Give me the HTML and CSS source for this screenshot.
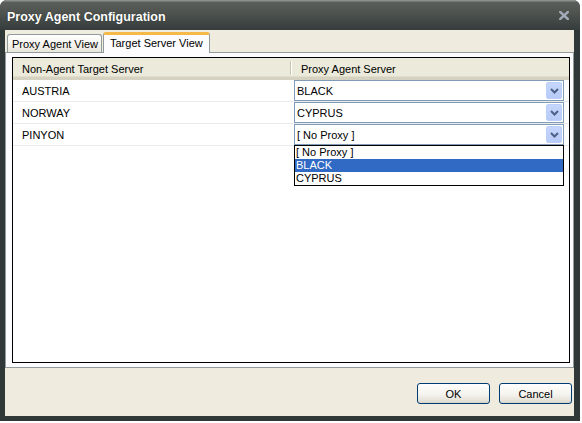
FILE: index.html
```html
<!DOCTYPE html>
<html>
<head>
<meta charset="utf-8">
<link rel="stylesheet" href="styles.css">
</head>
<body>
<div class="window">
  <div class="titlebar">
    <span class="title">Proxy Agent Configuration</span>
    <svg class="close" width="10" height="9" viewBox="0 0 10 9"><path d="M1.2 1 L8.8 8 M8.8 1 L1.2 8" stroke="#a2aab7" stroke-width="2.4" stroke-linecap="square"/></svg>
  </div>
  <div class="client">
    <div class="tabs">
      <div class="tab">Proxy Agent View</div>
      <div class="tab active">Target Server View</div>
    </div>
    <div class="panel">
      <div class="list">
        <div class="header">
          <div class="hcell first">Non-Agent Target Server</div>
          <div class="hdiv"></div>
          <div class="hcell">Proxy Agent Server</div>
        </div>
        <div class="row">
          <div class="name">AUSTRIA</div>
          <div class="combo"><span class="val">BLACK</span><span class="btn"><svg width="9" height="6" viewBox="0 0 9 6"><path d="M1 1 L4.5 4.5 L8 1" fill="none" stroke="#4d6185" stroke-width="2"/></svg></span></div>
        </div>
        <div class="row">
          <div class="name">NORWAY</div>
          <div class="combo"><span class="val">CYPRUS</span><span class="btn"><svg width="9" height="6" viewBox="0 0 9 6"><path d="M1 1 L4.5 4.5 L8 1" fill="none" stroke="#4d6185" stroke-width="2"/></svg></span></div>
        </div>
        <div class="row open">
          <div class="name">PINYON</div>
          <div class="combo"><span class="val">[ No Proxy ]</span><span class="btn"><svg width="9" height="6" viewBox="0 0 9 6"><path d="M1 1 L4.5 4.5 L8 1" fill="none" stroke="#4d6185" stroke-width="2"/></svg></span></div>
          <div class="dropdown">
            <div class="opt">[ No Proxy ]</div>
            <div class="opt sel">BLACK</div>
            <div class="opt">CYPRUS</div>
          </div>
        </div>
      </div>
    </div>
    <div class="actions">
      <button class="button">OK</button>
      <button class="button">Cancel</button>
    </div>
  </div>
</div>
</body>
</html>
```
FILE: styles.css
```css
* { box-sizing: border-box; }
body {
  margin: 0;
  background: #ffffff;
  font-family: "Liberation Sans", Arial, sans-serif;
  font-size: 11px;
  color: #000;
}
.window {
  width: 580px;
  height: 421px;
  background: #2f3737;
  border-radius: 7px 7px 0 0;
  display: flex;
  flex-direction: column;
}
.titlebar {
  flex: none;
  height: 30px;
  border-radius: 7px 7px 0 0;
  background: linear-gradient(#8d918d 0, #8d918d 1px, #5a5f5b 2px, #4d524e 45%, #353c3c 100%);
  display: flex;
  align-items: center;
  justify-content: space-between;
  padding: 3px 11px 0 7px;
}
.title {
  color: #ffffff;
  font-weight: bold;
  font-size: 12.5px;
  text-shadow: 0 0 1px rgba(0,0,0,0.5);
}
.close { display: block; margin-top: -2px; }
.client {
  flex: 1;
  margin: 0 6px 5px 5px;
  background: #efebdf;
  display: flex;
  flex-direction: column;
}
.tabs {
  flex: none;
  height: 22px;
  display: flex;
  align-items: flex-end;
  gap: 1px;
  padding-left: 2px;
}
.tab {
  width: 95px;
  height: 18px;
  padding: 1px 0 0 4px;
  border: 1px solid #919b9c;
  border-bottom: none;
  border-radius: 3px 3px 0 0;
  background: linear-gradient(#ffffff, #f3f2ec 60%, #e8e6dc);
  display: flex;
  align-items: center;
  white-space: nowrap;
}
.tab.active {
  width: 107px;
  height: 21px;
  padding: 0 0 2px 6px;
  border-top: 3px solid #f5b94a;
  background: #fcfcfe;
  margin-bottom: -1px;
  position: relative;
  z-index: 1;
}
.panel {
  flex: none;
  height: 316px;
  border: 1px solid #919b9c;
  background: #fcfcfe;
  padding: 4px 3px 4px 6px;
  display: flex;
}
.list {
  flex: 1;
  border: 1px solid #000;
  background: #ffffff;
}
.header {
  height: 22px;
  display: flex;
  align-items: center;
  background: #ebeadb;
  border-bottom: 3px solid #d6d2c2;
  box-shadow: inset 0 -1px 0 #e2decd;
}
.hcell { padding-left: 9px; padding-top: 2px; }
.hcell.first { width: 277px; }
.hdiv {
  width: 2px;
  height: 14px;
  border-left: 1px solid #c7c5b2;
  border-right: 1px solid #ffffff;
}
.row {
  height: 22px;
  display: flex;
  border-bottom: 1px solid #ebebeb;
  position: relative;
}
.name {
  width: 281px;
  padding-left: 9px;
  display: flex;
  align-items: center;
}
.combo {
  width: 270px;
  height: 21px;
  border: 1px solid #7f9db9;
  background: #fff;
  display: flex;
  align-items: center;
  justify-content: space-between;
  padding-left: 2px;
}
.btn {
  width: 16px;
  height: 17px;
  margin-right: 1px;
  border: 1px solid #bccffa;
  border-radius: 2px;
  background: linear-gradient(#c6d6fc, #b7cbf7);
  display: flex;
  align-items: center;
  justify-content: center;
}
.btn svg { display: block; }
.dropdown {
  position: absolute;
  top: 21px;
  left: 281px;
  width: 270px;
  height: 41px;
  border: 1px solid #000;
  background: #fff;
  z-index: 2;
}
.opt {
  height: 13px;
  line-height: 13px;
  padding-left: 1px;
}
.opt.sel {
  background: #316ac5;
  color: #fff;
}
.actions {
  flex: none;
  display: flex;
  justify-content: flex-end;
  gap: 9px;
  padding: 15px 2px 0 0;
}
.button {
  width: 73px;
  height: 21px;
  border: 1px solid #003c74;
  border-radius: 3px;
  background: linear-gradient(#ffffff, #f4f3ee 55%, #e3e0d6 90%, #d6d0c5);
  font-family: "Liberation Sans", Arial, sans-serif;
  font-size: 11px;
  color: #000;
  padding: 0;
}
```
